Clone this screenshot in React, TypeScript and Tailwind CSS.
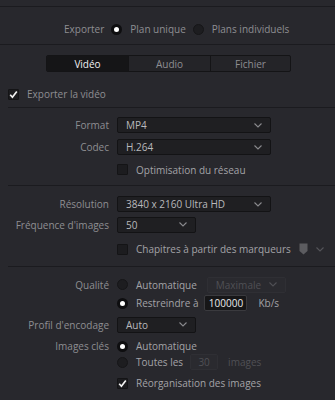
import React from "react";

const font = { fontFamily: '"Open Sans", "Noto Sans", sans-serif' };

function Chevron({ className = "" }: { className?: string }) {
  return (
    <svg width="8" height="5" viewBox="0 0 8 5" className={className}>
      <path d="M0.5 0.5 L4 4 L7.5 0.5" fill="none" stroke="currentColor" strokeWidth="1.1" />
    </svg>
  );
}

function Radio({ checked }: { checked?: boolean }) {
  return (
    <span
      className={`flex h-[11px] w-[11px] shrink-0 items-center justify-center rounded-full ${
        checked ? "bg-[#0e0e10]" : "border border-[#161618] bg-[#1d1d20]"
      }`}
    >
      {checked && <span className="h-[5px] w-[5px] rounded-full bg-white" />}
    </span>
  );
}

function Check({ checked }: { checked?: boolean }) {
  return (
    <span className="flex h-[11px] w-[11px] shrink-0 items-center justify-center rounded-[1px] border border-[#141416] bg-[#1c1c1f]">
      {checked && (
        <svg width="9" height="9" viewBox="0 0 9 9">
          <path d="M1.2 4.8 L3.4 7.2 L7.8 1.4" fill="none" stroke="#f2f2f2" strokeWidth="1.7" />
        </svg>
      )}
    </span>
  );
}

function Select({ value, w }: { value: string; w: string }) {
  return (
    <div
      className={`flex h-[16px] ${w} items-center justify-between rounded-[2px] border border-[#131315] bg-[#1f1f22] pl-[8px] pr-[8px] text-[#b9b9bc]`}
    >
      <span>{value}</span>
      <Chevron className="text-[#8a8a8e]" />
    </div>
  );
}

function Label({ children }: { children?: React.ReactNode }) {
  return <div className="w-[109px] shrink-0 whitespace-nowrap text-right text-[#8e8e92]">{children}</div>;
}

function Line() {
  return <div className="ml-[8px] h-px bg-[#1b1b1f]" />;
}

export default function App() {
  return (
    <div className="h-[400px] w-[335px] overflow-hidden whitespace-nowrap bg-[#28282d] text-[10px] leading-none" style={font}>
      <div className="h-[6px]" />
      <div className="h-px bg-[#1b1b1f]" />
      <div className="flex h-[37px] items-center pl-[64px] pt-[7px] text-[#8e8e92]">
        <span>Exporter</span>
        <span className="ml-[7px]"><Radio checked /></span>
        <span className="ml-[8px]">Plan unique</span>
        <span className="ml-[7px]"><Radio /></span>
        <span className="ml-[8px]">Plans individuels</span>
      </div>
      <div className="h-px bg-[#1b1b1f]" />
      <div className="mt-[10px] ml-[46px] flex h-[17px] w-[245px] overflow-hidden rounded-[2px] border border-[#141416] bg-[#242428]">
        <div className="flex w-[81px] items-center justify-center bg-[#151517] text-[#f0f0f0]">Vidéo</div>
        <div className="flex w-[82px] items-center justify-center border-l border-[#141416] text-[#8e8e92]">Audio</div>
        <div className="flex flex-1 items-center justify-center border-l border-[#141416] text-[#8e8e92]">Fichier</div>
      </div>
      <div className="mt-[16px] flex h-[12px] items-center pl-[8px] text-[#8e8e92]">
        <Check checked />
        <span className="ml-[8px]">Exporter la vidéo</span>
      </div>
      <div className="h-[7px]" />
      <Line />

      <div className="h-[6px]" />
      <div className="flex h-[22px] items-center">
        <Label>Format</Label>
        <div className="ml-[8px]"><Select value="MP4" w="w-[154px]" /></div>
      </div>
      <div className="flex h-[22px] items-center">
        <Label>Codec</Label>
        <div className="ml-[8px]"><Select value="H.264" w="w-[154px]" /></div>
      </div>
      <div className="flex h-[23px] items-center">
        <Label />
        <div className="ml-[8px] flex items-center text-[#a3a3a7]">
          <Check />
          <span className="ml-[8px]">Optimisation du réseau</span>
        </div>
      </div>
      <div className="h-[4px]" />
      <Line />

      <div className="h-[8px]" />
      <div className="flex h-[20px] items-center">
        <Label>Résolution</Label>
        <div className="ml-[8px]"><Select value="3840 x 2160 Ultra HD" w="w-[154px]" /></div>
      </div>
      <div className="flex h-[21px] items-center">
        <Label>Fréquence d'images</Label>
        <div className="ml-[8px]"><Select value="50" w="w-[79px]" /></div>
      </div>
      <div className="flex h-[28px] items-center">
        <Label />
        <div className="ml-[8px] flex items-center text-[#a3a3a7]">
          <Check />
          <span className="ml-[8px]">Chapitres à partir des marqueurs</span>
          <svg width="9" height="12" viewBox="0 0 9 12" className="ml-[8px]">
            <path d="M0.5 0.5 H8.5 V8 L4.5 11.5 L0.5 8 Z" fill="#5c5c60" />
          </svg>
          <Chevron className="ml-[8px] text-[#55555a]" />
        </div>
      </div>
      <div className="h-[3px]" />
      <Line />

      <div className="h-[8px]" />
      <div className="flex h-[19px] items-center">
        <Label>Qualité</Label>
        <div className="ml-[8px] flex items-center text-[#a3a3a7]">
          <Radio />
          <span className="ml-[8px]">Automatique</span>
          <div className="ml-[10px] flex h-[16px] w-[79px] items-center justify-between rounded-[2px] border border-[#2f2f34] bg-[#2a2a2f] pl-[8px] pr-[8px] text-[#505055]">
            <span>Maximale</span>
            <Chevron />
          </div>
        </div>
      </div>
      <div className="flex h-[18px] items-center">
        <Label />
        <div className="ml-[8px] flex items-center text-[#a3a3a7]">
          <Radio checked />
          <span className="ml-[8px]">Restreindre à</span>
          <div className="ml-[6px] flex h-[16px] w-[43px] items-center justify-center rounded-[2px] border border-[#3a3a3e] bg-[#161618] text-[#ececec]">
            100000
          </div>
          <span className="ml-[11px]">Kb/s</span>
        </div>
      </div>
      <div className="flex h-[25px] items-center">
        <Label>Profil d'encodage</Label>
        <div className="ml-[8px]"><Select value="Auto" w="w-[79px]" /></div>
      </div>
      <div className="flex h-[18px] items-center">
        <Label>Images clés</Label>
        <div className="ml-[8px] flex items-center text-[#a3a3a7]">
          <Radio checked />
          <span className="ml-[8px]">Automatique</span>
        </div>
      </div>
      <div className="flex h-[14px] items-center">
        <Label />
        <div className="ml-[8px] flex items-center text-[#a3a3a7]">
          <Radio />
          <span className="ml-[8px]">Toutes les</span>
          <div className="ml-[7px] flex h-[16px] w-[28px] items-center justify-center rounded-[2px] border border-[#2f2f34] bg-[#2a2a2f] text-[#505055]">
            30
          </div>
          <span className="ml-[10px] text-[#505055]">images</span>
        </div>
      </div>
      <div className="flex h-[28px] items-center">
        <Label />
        <div className="ml-[8px] flex items-center text-[#a3a3a7]">
          <Check checked />
          <span className="ml-[8px]">Réorganisation des images</span>
        </div>
      </div>
    </div>
  );
}
